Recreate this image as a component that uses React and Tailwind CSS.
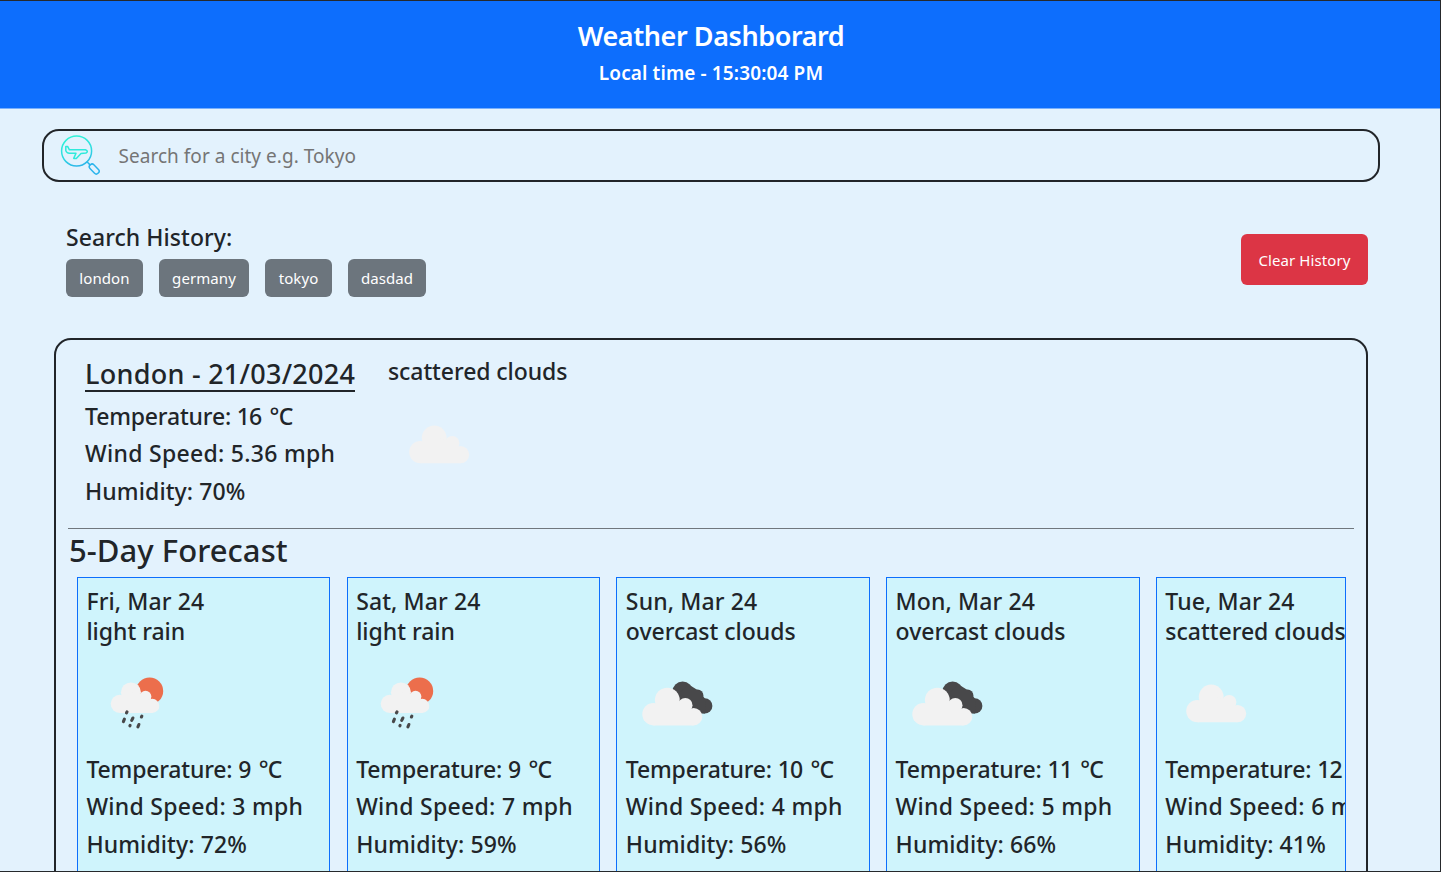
const FONT = "font-['Noto_Sans','Open_Sans',sans-serif]";

const history = [
  { city: 'london', width: 'w-[77px]' },
  { city: 'germany', width: 'w-[90px]' },
  { city: 'tokyo', width: 'w-[67px]' },
  { city: 'dasdad', width: 'w-[78px]' },
];

const forecast = [
  { day: 'Fri', sky: 'light rain', icon: 'rain', temp: 9, wind: 3, humidity: 72 },
  { day: 'Sat', sky: 'light rain', icon: 'rain', temp: 9, wind: 7, humidity: 59 },
  { day: 'Sun', sky: 'overcast clouds', icon: 'overcast', temp: 10, wind: 4, humidity: 56 },
  { day: 'Mon', sky: 'overcast clouds', icon: 'overcast', temp: 11, wind: 5, humidity: 66 },
  { day: 'Tue', sky: 'scattered clouds', icon: 'cloud', temp: 12, wind: 6, humidity: 41 },
];

function CloudShape() {
  return (
    <g>
      <circle cx="11.2" cy="26.5" r="11.2" />
      <circle cx="25" cy="12.4" r="12.4" />
      <circle cx="43" cy="17.5" r="7.2" />
      <circle cx="51.3" cy="29" r="8.7" />
      <path d="M11.2 22 L25 12 L36.8 14 L43 17.5 L51.3 24 V37.7 H11.2 Z" />
    </g>
  );
}

function WeatherIcon({ kind }) {
  return (
    <svg width="100" height="100" viewBox="0 0 100 100" className="block shrink-0">
      {kind === 'cloud' && (
        <g transform="translate(21.2 31.6)" fill="#f2f2f2">
          <CloudShape />
        </g>
      )}
      {kind === 'overcast' && (
        <>
          <g fill="#48484a">
            <circle cx="56.6" cy="38.6" r="10.2" />
            <circle cx="71.6" cy="42.4" r="5.8" />
            <circle cx="78.7" cy="52.9" r="7.7" />
            <path d="M50 44 L62 31 L73 38 L80 47 L79 60.6 H68 Z" />
          </g>
          <g transform="translate(16.3 34.7)" fill="#f2f2f2">
            <CloudShape />
          </g>
        </>
      )}
      {kind === 'rain' && (
        <>
          <circle cx="63.6" cy="38" r="13.6" fill="#ec6e4c" />
          <g transform="translate(24.7 29.4) scale(0.81)" fill="#f2f2f2">
            <CloudShape />
          </g>
          <g stroke="#48484a" strokeWidth="3.1" strokeLinecap="round">
            <path d="M41 58.8 L40.5 59.9" />
            <path d="M38.4 66.2 L37.4 68.6" />
            <path d="M46.9 65 L45.7 67.4" />
            <path d="M55.8 63.2 L55.4 64" />
            <path d="M44.1 72.4 L43.9 72.8" />
            <path d="M52.9 71.5 L51.9 73.9" />
          </g>
        </>
      )}
    </svg>
  );
}

function SearchIcon() {
  return (
    <svg width="41" height="41" viewBox="0 0 41 41" fill="none" className="shrink-0">
      <defs>
        <linearGradient id="lens" gradientUnits="userSpaceOnUse" x1="10" y1="0" x2="22" y2="40">
          <stop offset="0" stopColor="#2ff5d6" />
          <stop offset="0.45" stopColor="#30dce0" />
          <stop offset="1" stopColor="#2a9df0" />
        </linearGradient>
      </defs>
      <g stroke="url(#lens)" strokeWidth="1.5" strokeLinejoin="round" strokeLinecap="round">
        <circle cx="16.6" cy="16" r="15" />
        <path
          stroke="#2feadb"
          d="M5.8 11.4 V15.6 Q6.6 18.2 9.3 18.3 H16 L13.7 23.4 H16.3 L21 18.4 L26 18 Q29 16.4 25.4 14.8 H9.4 L7.6 11.4 Z"
        />
        <path d="M27.2 27 L29.8 29.6" />
      </g>
      <rect
        x="-5.7"
        y="-2.7"
        width="11.4"
        height="5.4"
        rx="2.4"
        transform="translate(34.2 34) rotate(46)"
        stroke="#2bb4ec"
        strokeWidth="1.5"
      />
    </svg>
  );
}

function Readings({ temp, wind, humidity }) {
  return (
    <div className="text-[23px] leading-[37px] font-medium whitespace-nowrap">
      <p className="h-[37px] tracking-[-0.18px]">
        Temperature: <span className="tracking-[-0.9px]">{temp}</span>
        <span className="tracking-[-0.7px] [word-spacing:3px]"> °C</span>
      </p>
      <p className="h-[38px] tracking-[0.29px]">Wind Speed: {wind} mph</p>
      <p className="h-[37px] tracking-[0.1px]">Humidity: {humidity}%</p>
    </div>
  );
}

function ForecastCard({ item }) {
  return (
    <article className="h-[340px] w-[253.6px] shrink-0 border border-[#0d6efd] bg-[#cff4fc] pl-[8.5px] pt-[8px]">
      <div className="h-[67px] text-[23px] leading-[30px] font-medium whitespace-nowrap">
        <p className="tracking-[0.12px]">{item.day}, Mar 24</p>
        <p className="tracking-[-0.02px]">{item.sky}</p>
      </div>
      <div className="h-[98px]">
        <WeatherIcon kind={item.icon} />
      </div>
      <Readings temp={item.temp} wind={item.wind} humidity={item.humidity} />
    </article>
  );
}

export default function App() {
  return (
    <div className={`h-[872px] w-[1441px] overflow-hidden border-y border-r border-[#26292c] bg-[#e3f2fd] text-[#212529] ${FONT}`}>
      <header className="flex h-[108px] flex-col items-center border-b border-[#78b0fd] bg-[#0d6efd] pr-[18px] pt-[17px] text-white">
        <h1 className="text-[27px] leading-[36px] font-semibold tracking-[-0.42px]">Weather Dashborard</h1>
        <p className="mt-[5px] text-[19px] leading-[28px] font-semibold tracking-[0.12px]">Local time - 15:30:04 PM</p>
      </header>

      <main>
        <div className="ml-[42px] mt-[20px] flex h-[53px] w-[1338px] items-center rounded-[17px] border-2 border-[#212529] pl-[16px]">
          <SearchIcon />
          <input
            className="ml-[17.5px] flex-1 bg-transparent text-[19px] leading-[28px] tracking-[0.03px] outline-none placeholder:text-[#757575]"
            placeholder="Search for a city e.g. Tokyo"
          />
        </div>

        <section className="ml-[66px] mt-[39px] flex h-[117px] w-[1302px] justify-between">
          <div>
            <h2 className="text-[23px] leading-[32px] font-medium tracking-[0.05px]">Search History:</h2>
            <div className="mt-[6px] flex gap-[16px]">
              {history.map(({ city, width }) => (
                <button key={city} className={`h-[38px] rounded-[6px] bg-[#6c757d] text-[15px] leading-[24px] tracking-[0.08px] text-white ${width}`}>
                  {city}
                </button>
              ))}
            </div>
          </div>
          <button className="mt-[13px] h-[51px] w-[127px] rounded-[6px] bg-[#dc3545] pt-[2px] text-[15px] tracking-[0.08px] text-white">
            Clear History
          </button>
        </section>

        <section className="ml-[54px] h-[600px] w-[1314px] rounded-[17px] border-2 border-[#212529] px-[12px] pt-[13px]">
          <div className="flex h-[175px] pl-[17px]">
            <div className="w-[303px]">
              <h2 className="mb-[6px] mt-[1px] block h-[38px] w-[270px] border-b-2 border-[#212529] text-[27px] leading-[39px] font-medium tracking-[0.27px] whitespace-nowrap">
                London - 21/03/2024
              </h2>
              <Readings temp={16} wind="5.36" humidity={70} />
            </div>
            <div>
              <p className="text-[23px] leading-[36px] font-medium tracking-[-0.08px]">scattered clouds</p>
              <div className="mt-[5px]">
                <WeatherIcon kind="cloud" />
              </div>
            </div>
          </div>
          <hr className="border-t border-[#70777d]" />
          <h2 className="h-[48px] pl-[1px] text-[31px] leading-[43px] font-medium tracking-[0.05px]">5-Day Forecast</h2>
          <div className="ml-[8.9px] flex w-[1269.1px] gap-[16.15px] overflow-hidden border-r border-[#0d6efd]">
            {forecast.map((item) => (
              <ForecastCard key={item.day} item={item} />
            ))}
          </div>
        </section>
      </main>
    </div>
  );
}
